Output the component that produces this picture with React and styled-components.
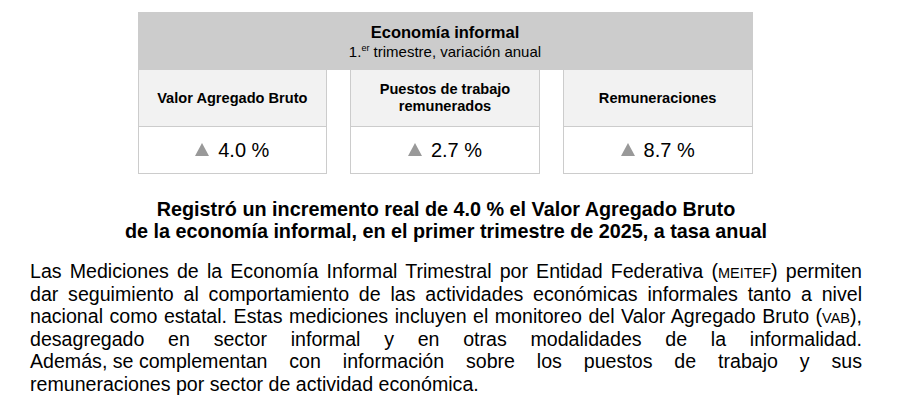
import styled, { createGlobalStyle } from 'styled-components';

const GlobalStyle = createGlobalStyle`
  body {
    margin: 0;
    background: #fff;
    font-family: 'Liberation Sans', Arial, sans-serif;
    color: #000;
  }
`;

const indicators = [
  { label: 'Valor Agregado Bruto', value: '4.0' },
  { label: 'Puestos de trabajo remunerados', value: '2.7' },
  { label: 'Remuneraciones', value: '8.7' },
];

const App = () => (
  <>
    <GlobalStyle />
    <Page>
      <Board>
        <Header>
          <h1>Economía informal</h1>
          <p>
            1.<sup>er</sup> trimestre, variación anual
          </p>
        </Header>
        <Cards>
          {indicators.map((item) => (
            <Card key={item.label}>
              <CardLabel>{item.label}</CardLabel>
              <CardValue>
                <Arrow />
                {item.value} %
              </CardValue>
            </Card>
          ))}
        </Cards>
      </Board>
      <Headline>
        Registró un incremento real de 4.0 % el Valor Agregado Bruto
        <br />
        de la economía informal, en el primer trimestre de 2025, a tasa anual
      </Headline>
      <Body>
        Las Mediciones de la Economía Informal Trimestral por Entidad Federativa
        (<Abbr>MEITEF</Abbr>) permiten dar seguimiento al comportamiento de las
        actividades económicas informales tanto a nivel nacional como estatal.
        Estas mediciones incluyen el monitoreo del Valor Agregado Bruto (<Abbr>VAB</Abbr>),
        desagregado en sector informal y en otras modalidades de la
        informalidad. <Keep>Además, se complementan</Keep> con información
        sobre los puestos de trabajo y sus {'remuneraciones\u00a0por'} sector de
        actividad económica.
      </Body>
    </Page>
  </>
);

export default App;

const Page = styled.div`
  width: 832px;
  padding: 12px 0 0 30px;
  display: flex;
  flex-direction: column;
  align-items: center;
`;

const Board = styled.div`
  width: 615px;
  margin-left: -2px;
`;

const Header = styled.div`
  background: #cccccc;
  height: 58px;
  display: flex;
  flex-direction: column;
  align-items: center;
  justify-content: center;
  h1 {
    margin: 0;
    font-size: 16.5px;
    font-weight: bold;
    line-height: 20px;
  }
  p {
    margin: 1px 0 0;
    font-size: 15px;
    line-height: 18px;
  }
  sup {
    font-size: 9px;
    vertical-align: 6px;
    line-height: 0;
  }
`;

const Cards = styled.div`
  display: grid;
  grid-template-columns: repeat(3, 1fr);
  gap: 23px;
`;

const Card = styled.div`
  border: 1px solid #cccccc;
  border-top: none;
`;

const CardLabel = styled.div`
  background: #f2f2f2;
  height: 56px;
  border-bottom: 1px solid #cccccc;
  display: flex;
  align-items: center;
  justify-content: center;
  text-align: center;
  padding: 0 10px;
  font-size: 14.6px;
  font-weight: bold;
  line-height: 17px;
`;

const CardValue = styled.div`
  height: 46px;
  display: flex;
  align-items: center;
  justify-content: center;
  gap: 9px;
  font-size: 20px;
`;

const Arrow = styled.span`
  width: 0;
  height: 0;
  border-left: 7.5px solid transparent;
  border-right: 7.5px solid transparent;
  border-bottom: 13px solid #999999;
  margin-bottom: 1px;
`;

const Headline = styled.h2`
  margin: 24px 0 0;
  text-align: center;
  font-size: 19.8px;
  font-weight: bold;
  line-height: 22px;
`;

const Body = styled.p`
  margin: 18px 0 0;
  width: 832px;
  text-align: justify;
  font-size: 19.6px;
  line-height: 22.6px;
`;

const Abbr = styled.span`
  font-size: 14.5px;
  line-height: 1;
`;

const Keep = styled.span`
  display: inline-block;
  white-space: nowrap;
`;
